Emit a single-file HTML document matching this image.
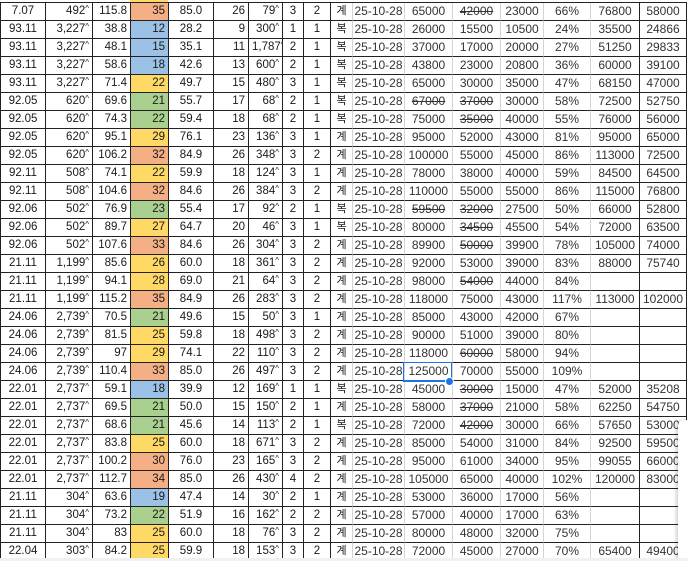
<!DOCTYPE html>
<html><head><meta charset="utf-8">
<style>
html,body{margin:0;padding:0;background:#fff;width:688px;height:561px;overflow:hidden;position:relative}
.top{position:absolute;left:0;top:0;width:688px;height:3px}
.top i{position:absolute;top:0;left:130px;width:38px;height:3px;background:#ffd966}
table{position:absolute;left:0;top:2px;border-collapse:separate;border-spacing:0;table-layout:fixed;width:687px;border-top:1px solid #222;border-left:1px solid #222;font-family:"Liberation Sans","Noto Sans CJK KR",sans-serif;font-size:11.5px;color:#1a1a1a}
tr{height:18px}
td{height:17px;box-sizing:content-box;padding:0 3px;line-height:17px;border-right:1px solid #222;border-bottom:1px solid #222;white-space:nowrap;overflow:hidden;text-align:center}
td:nth-child(2),td:nth-child(3),td:nth-child(4),td:nth-child(6),td:nth-child(7){text-align:right}
td:nth-child(n+10):nth-child(-n+15){border-right-color:#d4d4d4}
td:nth-child(n+11){font-size:12px;color:#333;padding:0 1px}
td:nth-child(10){font-size:11px}
i{font-style:normal;font-size:8px;vertical-align:3px;line-height:0}
.o{background:#f4b084}.b{background:#9bc2e6}.y{background:#ffd966}.g{background:#a9d08e}
s{text-decoration:line-through}
.sel{position:absolute;left:403px;top:362px;width:47px;height:17px;border:1px solid #1a73e8;border-bottom:2px solid #1a73e8}
.hd{position:absolute;left:445px;top:377px;width:7px;height:7px;border-radius:50%;background:#1a73e8;border:1px solid #fff}
.ov{position:absolute;left:678px;top:420px;width:12px;height:141px;background:#fff;box-shadow:-2px 0 3px rgba(0,0,0,.18);border-top-left-radius:6px}
.bot{position:absolute;left:0;top:558px;width:688px;height:3px;background:#f1f1f1}
</style></head><body>
<div class="top"><i></i></div>
<table>
<colgroup><col style="width:45px"><col style="width:47px"><col style="width:38px"><col style="width:38px"><col style="width:45px"><col style="width:35px"><col style="width:34px"><col style="width:21px"><col style="width:27px"><col style="width:22px"><col style="width:52px"><col style="width:48px"><col style="width:48px"><col style="width:43px"><col style="width:47px"><col style="width:49px"><col style="width:47px"></colgroup>
<tr><td>7.07<td>492<i>^</i><td>115.8<td class=o>35<td>85.0<td>26<td>79<i>^</i><td>3<td>2<td>계<td>25-10-28<td>65000<td><s>42000</s><td>23000<td>66%<td>76800<td>58000</tr>
<tr><td>93.11<td>3,227<i>^</i><td>38.8<td class=b>12<td>28.2<td>9<td>300<i>^</i><td>1<td>1<td>복<td>25-10-28<td>26000<td>15500<td>10500<td>24%<td>35500<td>24866</tr>
<tr><td>93.11<td>3,227<i>^</i><td>48.1<td class=b>15<td>35.1<td>11<td>1,787<i>^</i><td>2<td>1<td>복<td>25-10-28<td>37000<td>17000<td>20000<td>27%<td>51250<td>29833</tr>
<tr><td>93.11<td>3,227<i>^</i><td>58.6<td class=b>18<td>42.6<td>13<td>600<i>^</i><td>2<td>1<td>복<td>25-10-28<td>43800<td>23000<td>20800<td>36%<td>60000<td>39100</tr>
<tr><td>93.11<td>3,227<i>^</i><td>71.4<td class=y>22<td>49.7<td>15<td>480<i>^</i><td>3<td>1<td>복<td>25-10-28<td>65000<td>30000<td>35000<td>47%<td>68150<td>47000</tr>
<tr><td>92.05<td>620<i>^</i><td>69.6<td class=g>21<td>55.7<td>17<td>68<i>^</i><td>2<td>1<td>복<td>25-10-28<td><s>67000</s><td><s>37000</s><td>30000<td>58%<td>72500<td>52750</tr>
<tr><td>92.05<td>620<i>^</i><td>74.3<td class=g>22<td>59.4<td>18<td>68<i>^</i><td>2<td>1<td>복<td>25-10-28<td>75000<td><s>35000</s><td>40000<td>55%<td>76000<td>56000</tr>
<tr><td>92.05<td>620<i>^</i><td>95.1<td class=y>29<td>76.1<td>23<td>136<i>^</i><td>3<td>1<td>계<td>25-10-28<td>95000<td>52000<td>43000<td>81%<td>95000<td>65000</tr>
<tr><td>92.05<td>620<i>^</i><td>106.2<td class=o>32<td>84.9<td>26<td>348<i>^</i><td>3<td>2<td>계<td>25-10-28<td>100000<td>55000<td>45000<td>86%<td>113000<td>72500</tr>
<tr><td>92.11<td>508<i>^</i><td>74.1<td class=y>22<td>59.9<td>18<td>124<i>^</i><td>3<td>1<td>계<td>25-10-28<td>78000<td>38000<td>40000<td>59%<td>84500<td>64500</tr>
<tr><td>92.11<td>508<i>^</i><td>104.6<td class=o>32<td>84.6<td>26<td>384<i>^</i><td>3<td>2<td>계<td>25-10-28<td>110000<td>55000<td>55000<td>86%<td>115000<td>76800</tr>
<tr><td>92.06<td>502<i>^</i><td>76.9<td class=g>23<td>55.4<td>17<td>92<i>^</i><td>2<td>1<td>복<td>25-10-28<td><s>59500</s><td><s>32000</s><td>27500<td>50%<td>66000<td>52800</tr>
<tr><td>92.06<td>502<i>^</i><td>89.7<td class=y>27<td>64.7<td>20<td>46<i>^</i><td>3<td>1<td>복<td>25-10-28<td>80000<td><s>34500</s><td>45500<td>54%<td>72000<td>63500</tr>
<tr><td>92.06<td>502<i>^</i><td>107.6<td class=o>33<td>84.6<td>26<td>304<i>^</i><td>3<td>2<td>계<td>25-10-28<td>89900<td><s>50000</s><td>39900<td>78%<td>105000<td>74000</tr>
<tr><td>21.11<td>1,199<i>^</i><td>85.6<td class=y>26<td>60.0<td>18<td>361<i>^</i><td>3<td>2<td>계<td>25-10-28<td>92000<td>53000<td>39000<td>83%<td>88000<td>75740</tr>
<tr><td>21.11<td>1,199<i>^</i><td>94.1<td class=y>28<td>69.0<td>21<td>64<i>^</i><td>3<td>2<td>계<td>25-10-28<td>98000<td><s>54000</s><td>44000<td>84%<td><td></tr>
<tr><td>21.11<td>1,199<i>^</i><td>115.2<td class=o>35<td>84.9<td>26<td>283<i>^</i><td>3<td>2<td>계<td>25-10-28<td>118000<td>75000<td>43000<td>117%<td>113000<td>102000</tr>
<tr><td>24.06<td>2,739<i>^</i><td>70.5<td class=g>21<td>49.6<td>15<td>50<i>^</i><td>3<td>1<td>계<td>25-10-28<td>85000<td>43000<td>42000<td>67%<td><td></tr>
<tr><td>24.06<td>2,739<i>^</i><td>81.5<td class=y>25<td>59.8<td>18<td>498<i>^</i><td>3<td>2<td>계<td>25-10-28<td>90000<td>51000<td>39000<td>80%<td><td></tr>
<tr><td>24.06<td>2,739<i>^</i><td>97<td class=y>29<td>74.1<td>22<td>110<i>^</i><td>3<td>2<td>계<td>25-10-28<td>118000<td><s>60000</s><td>58000<td>94%<td><td></tr>
<tr><td>24.06<td>2,739<i>^</i><td>110.4<td class=o>33<td>85.0<td>26<td>497<i>^</i><td>3<td>2<td>계<td>25-10-28<td>125000<td>70000<td>55000<td>109%<td><td></tr>
<tr><td>22.01<td>2,737<i>^</i><td>59.1<td class=b>18<td>39.9<td>12<td>169<i>^</i><td>1<td>1<td>복<td>25-10-28<td>45000<td><s>30000</s><td>15000<td>47%<td>52000<td>35208</tr>
<tr><td>22.01<td>2,737<i>^</i><td>69.5<td class=g>21<td>50.0<td>15<td>150<i>^</i><td>2<td>1<td>계<td>25-10-28<td>58000<td><s>37000</s><td>21000<td>58%<td>62250<td>54750</tr>
<tr><td>22.01<td>2,737<i>^</i><td>68.6<td class=g>21<td>45.6<td>14<td>113<i>^</i><td>2<td>1<td>복<td>25-10-28<td>72000<td><s>42000</s><td>30000<td>66%<td>57650<td>53000</tr>
<tr><td>22.01<td>2,737<i>^</i><td>83.8<td class=y>25<td>60.0<td>18<td>671<i>^</i><td>3<td>2<td>계<td>25-10-28<td>85000<td>54000<td>31000<td>84%<td>92500<td>59500</tr>
<tr><td>22.01<td>2,737<i>^</i><td>100.2<td class=o>30<td>76.0<td>23<td>165<i>^</i><td>3<td>2<td>계<td>25-10-28<td>95000<td>61000<td>34000<td>95%<td>99055<td>66000</tr>
<tr><td>22.01<td>2,737<i>^</i><td>112.7<td class=o>34<td>85.0<td>26<td>430<i>^</i><td>4<td>2<td>계<td>25-10-28<td>105000<td>65000<td>40000<td>102%<td>120000<td>83000</tr>
<tr><td>21.11<td>304<i>^</i><td>63.6<td class=b>19<td>47.4<td>14<td>30<i>^</i><td>2<td>1<td>계<td>25-10-28<td>53000<td>36000<td>17000<td>56%<td><td></tr>
<tr><td>21.11<td>304<i>^</i><td>73.2<td class=g>22<td>51.9<td>16<td>162<i>^</i><td>2<td>2<td>계<td>25-10-28<td>57000<td>40000<td>17000<td>63%<td><td></tr>
<tr><td>21.11<td>304<i>^</i><td>83<td class=y>25<td>60.0<td>18<td>76<i>^</i><td>3<td>2<td>계<td>25-10-28<td>80000<td>48000<td>32000<td>75%<td><td></tr>
<tr><td>22.04<td>303<i>^</i><td>84.2<td class=y>25<td>59.9<td>18<td>153<i>^</i><td>3<td>2<td>계<td>25-10-28<td>72000<td>45000<td>27000<td>70%<td>65400<td>49400</tr>
</table>
<div class="sel"></div><div class="hd"></div>
<div class="ov"></div>
<div class="bot"></div>
</body></html>
